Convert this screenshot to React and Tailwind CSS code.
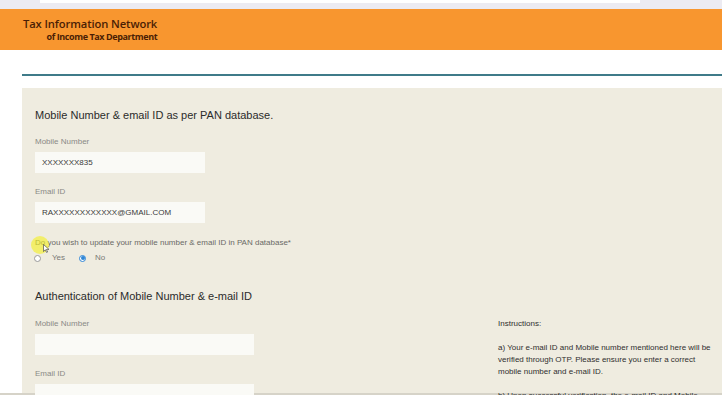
import React from 'react';

const Field = ({ label, value, width, labelTop }) => (
  <div>
    <p className={`text-[8px] text-[#8a8a86] leading-[10px] ${labelTop}`}>{label}</p>
    <div
      className={`mt-[5px] h-[21px] bg-[#fafaf6] flex items-center pl-[7px] text-[8px] text-[#3a3a3a] ${width}`}
    >
      {value}
    </div>
  </div>
);

const App = () => {
  return (
    <div className="h-[395px] w-[722px] overflow-hidden flex flex-col bg-white font-['Liberation_Sans',Arial,sans-serif]">
      {/* browser strip */}
      <div className="h-[9px] bg-[#ecebf2] flex items-start shrink-0">
        <div className="ml-[40px] h-[3px] w-[600px] bg-white" />
      </div>

      {/* header */}
      <div className="h-[41px] bg-[#f8962f] shrink-0 pl-[23px] pt-[8px] flex items-start">
        <div className="flex flex-col items-end font-['Open_Sans',sans-serif] text-[#4b1e05]">
          <span className="text-[11.2px] leading-[14px] font-semibold tracking-[-0.1px]">Tax Information Network</span>
          <span className="text-[9px] leading-[11px] font-bold tracking-[-0.4px]">of Income Tax Department</span>
        </div>
      </div>

      {/* white band with rule */}
      <div className="flex-1 min-h-0 pl-[22px] flex flex-col">
        <div className="h-[24px] shrink-0" />
        <div className="h-[2px] bg-[#3f7b89] shrink-0" />
        <div className="h-[12px] shrink-0" />

        {/* beige panel */}
        <div className="flex-1 min-h-0 bg-[#efece0] pl-[13px] pt-[20px] relative">
          <h2 className="text-[11px] leading-[15px] text-[#2b2b2b]">Mobile Number &amp; email ID as per PAN database.</h2>

          <Field label="Mobile Number" value="XXXXXXX835" width="w-[170px]" labelTop="mt-[14px]" />
          <Field label="Email ID" value="RAXXXXXXXXXXXX@GMAIL.COM" width="w-[170px]" labelTop="mt-[14px]" />

          <p className="mt-[15px] text-[8px] leading-[10px] text-[#6a6a66]">
            Do you wish to update your mobile number &amp; email ID in PAN database*
          </p>
          <div className="mt-[5px] flex items-center text-[8px] text-[#7a7a76] leading-[10px]">
            <span className="w-[7px] h-[7px] rounded-full border border-[#9a9a9a] bg-white ml-[-1px]" />
            <span className="ml-[11px]">Yes</span>
            <span className="ml-[14px] w-[7px] h-[7px] rounded-full bg-white border border-[#2f86d6] flex items-center justify-center">
              <span className="w-[4px] h-[4px] rounded-full bg-[#2f86d6]" />
            </span>
            <span className="ml-[9px]">No</span>
          </div>

          <div className="mt-[25px] flex">
            <div className="w-[463px] shrink-0">
              <h2 className="text-[11px] leading-[16px] text-[#2b2b2b]">Authentication of Mobile Number &amp; e-mail ID</h2>
              <Field label="Mobile Number" value="" width="w-[219px]" labelTop="mt-[15px]" />
              <Field label="Email ID" value="" width="w-[219px]" labelTop="mt-[14px]" />
            </div>
            <div className="pt-[30px] text-[8px] leading-[12px] text-[#2f2f2f] w-[216px]">
              <p>Instructions:</p>
              <p className="mt-[12px]">
                a) Your e-mail ID and Mobile number mentioned here will be verified through OTP. Please ensure you enter a correct mobile number and e-mail ID.
              </p>
              <p className="mt-[12px]">
                b) Upon successful verification, the e-mail ID and Mobile number will be updated.
              </p>
            </div>
          </div>

          {/* cursor highlight */}
          <div className="absolute left-[9px] top-[148px] w-[18px] h-[18px] rounded-full bg-[#f4f01e]/60" />
          <svg className="absolute left-[21px] top-[156px]" width="7" height="9" viewBox="0 0 7 9">
            <path d="M0.5 0.5 L0.5 7.5 L2.3 5.8 L3.6 8.5 L4.6 8 L3.4 5.4 L6 5.4 Z" fill="#fff" stroke="#333" strokeWidth="0.6" />
          </svg>
        </div>
      </div>

      <div className="h-[2px] bg-[#d6d3c8] shrink-0" />
    </div>
  );
};

export default App;
